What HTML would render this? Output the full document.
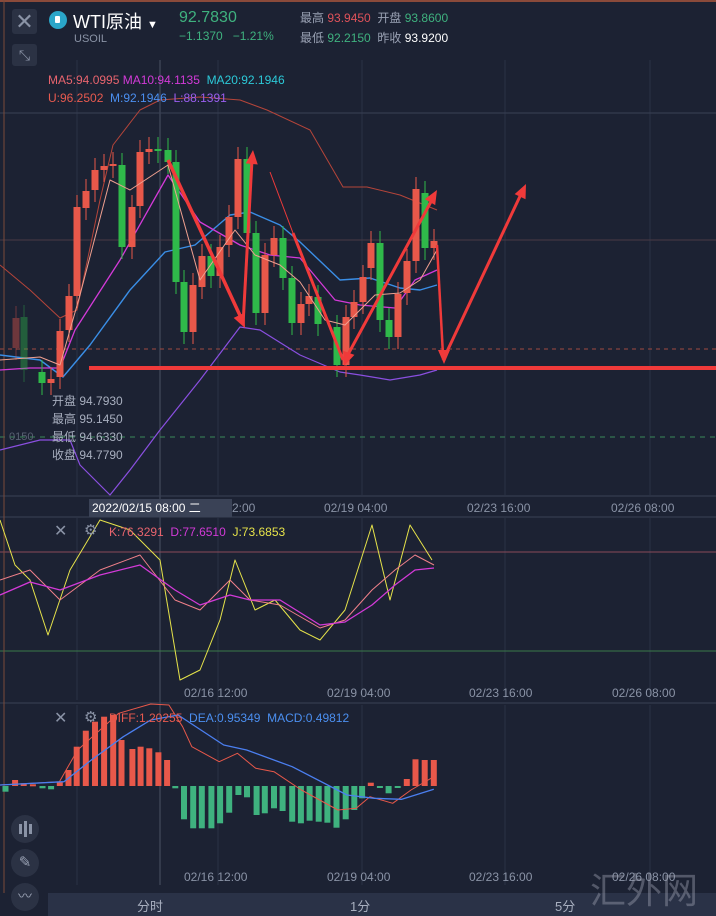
<!DOCTYPE html><html><head><meta charset="utf-8"><style>
body{margin:0;width:716px;height:916px;background:#1c2233;overflow:hidden;font-family:"Liberation Sans","Noto Sans CJK SC",sans-serif;position:relative}
.t{position:absolute;white-space:nowrap}
</style></head><body>
<svg id="s" width="716" height="916" style="position:absolute;left:0;top:0" xmlns="http://www.w3.org/2000/svg"></svg>
<div class="t" style="left:12px;top:9px;width:25px;height:25px;background:#2b3244;border-radius:3px;color:#8a93a6;font-size:22px;line-height:25px;text-align:center">✕</div>
<div class="t" style="left:12px;top:44px;width:25px;height:22px;background:#2b3244;border-radius:3px;color:#8a93a6;font-size:14px;line-height:22px;text-align:center">⤡</div>
<div class="t" style="left:49px;top:11px;width:18px;height:18px;border-radius:50%;background:#2aa6c9"><div style="position:absolute;left:6px;top:5px;width:5px;height:7px;background:#fff;border-radius:1px"></div></div>
<div class="t" style="left:73px;top:8px;color:#fff;font-size:18px">WTI原油 <span style="font-size:11px">▼</span></div>
<div class="t" style="left:74px;top:33px;color:#8a93a6;font-size:11px">USOIL</div>
<div class="t" style="left:179px;top:9px;color:#3fb27f;font-size:16px">92.7830</div>
<div class="t" style="left:179px;top:29px;color:#3fb27f;font-size:12px">−1.1370 &nbsp; −1.21%</div>
<div class="t" style="left:300px;top:9px;font-size:12px;color:#9aa2b4">最高 <span style="color:#e0525a">93.9450</span> &nbsp;开盘 <span style="color:#3fb27f">93.8600</span></div>
<div class="t" style="left:300px;top:29px;font-size:12px;color:#9aa2b4">最低 <span style="color:#3fb27f">92.2150</span> &nbsp;昨收 <span style="color:#fff">93.9200</span></div>
<div class="t" style="left:48px;top:73px;font-size:12px;color:#e8646e">MA5:94.0995 <span style="color:#d33ad8">MA10:94.1135</span> &nbsp;<span style="color:#2cc9d8">MA20:92.1946</span></div>
<div class="t" style="left:48px;top:91px;font-size:12px;color:#e85a4f">U:96.2502 &nbsp;<span style="color:#4b8ff0">M:92.1946</span> &nbsp;<span style="color:#9a5ef0">L:88.1391</span></div>
<div class="t" style="left:52px;top:392px;font-size:12px;color:#a8afbf;line-height:18px">开盘 94.7930<br>最高 95.1450<br>最低 94.6330<br>收盘 94.7790</div>
<div class="t" style="left:9px;top:431px;font-size:11px;color:#5a6274">0150</div>
<div class="t" style="left:89px;top:499px;width:140px;height:18px;background:#3a4256;color:#fff;font-size:12px;line-height:18px;padding-left:3px">2022/02/15 08:00 二</div>
<div class="t" style="left:232px;top:501px;font-size:12px;color:#8a93a6">2:00</div>
<div class="t" style="left:324px;top:501px;font-size:12px;color:#8a93a6">02/19 04:00</div>
<div class="t" style="left:467px;top:501px;font-size:12px;color:#8a93a6">02/23 16:00</div>
<div class="t" style="left:611px;top:501px;font-size:12px;color:#8a93a6">02/26 08:00</div>
<div class="t" style="left:54px;top:521px;font-size:16px;color:#8a93a6">✕</div>
<div class="t" style="left:84px;top:521px;font-size:15px;color:#8a93a6">⚙</div>
<div class="t" style="left:109px;top:525px;font-size:12px;color:#e8646e">K:76.3291 &nbsp;<span style="color:#d33ad8">D:77.6510</span> &nbsp;<span style="color:#e6e34a">J:73.6853</span></div>
<div class="t" style="left:54px;top:708px;font-size:16px;color:#8a93a6">✕</div>
<div class="t" style="left:84px;top:708px;font-size:15px;color:#8a93a6">⚙</div>
<div class="t" style="left:109px;top:711px;font-size:12px;color:#e85a4f">DIFF:1.20255 &nbsp;<span style="color:#4b8ff0">DEA:0.95349 &nbsp;MACD:0.49812</span></div>
<div class="t" style="left:184px;top:686px;font-size:12px;color:#8a93a6">02/16 12:00</div>
<div class="t" style="left:327px;top:686px;font-size:12px;color:#8a93a6">02/19 04:00</div>
<div class="t" style="left:469px;top:686px;font-size:12px;color:#8a93a6">02/23 16:00</div>
<div class="t" style="left:612px;top:686px;font-size:12px;color:#8a93a6">02/26 08:00</div>
<div class="t" style="left:184px;top:870px;font-size:12px;color:#8a93a6">02/16 12:00</div>
<div class="t" style="left:327px;top:870px;font-size:12px;color:#8a93a6">02/19 04:00</div>
<div class="t" style="left:469px;top:870px;font-size:12px;color:#8a93a6">02/23 16:00</div>
<div class="t" style="left:612px;top:870px;font-size:12px;color:#8a93a6">02/26 08:00</div>
<div class="t" style="left:48px;top:893px;width:668px;height:23px;background:#2a3247"></div>
<div class="t" style="left:137px;top:896px;font-size:13px;color:#a8afbf">分时</div>
<div class="t" style="left:350px;top:896px;font-size:13px;color:#a8afbf">1分</div>
<div class="t" style="left:555px;top:896px;font-size:13px;color:#a8afbf">5分</div>
<div class="t" style="left:590px;top:862px;font-size:36px;color:rgba(150,155,170,0.45)">汇外网</div>
<div class="t" style="left:11px;top:815px;width:28px;height:28px;border-radius:50%;background:#2b3244"><div style="position:absolute;left:8px;top:9px;width:3px;height:10px;background:#8a93a6"></div><div style="position:absolute;left:13px;top:6px;width:3px;height:16px;background:#8a93a6"></div><div style="position:absolute;left:18px;top:9px;width:3px;height:10px;background:#8a93a6"></div></div>
<div class="t" style="left:11px;top:849px;width:28px;height:28px;border-radius:50%;background:#2b3244;color:#9aa2b4;font-size:15px;text-align:center;line-height:28px">✎</div>
<div class="t" style="left:11px;top:883px;width:28px;height:28px;border-radius:50%;background:#2b3244;color:#9aa2b4;font-size:14px;text-align:center;line-height:26px">〰</div>
<script>
const s=document.getElementById('s');let h='';
const L=(x1,y1,x2,y2,c,w,d)=>h+=`<line x1="${x1}" y1="${y1}" x2="${x2}" y2="${y2}" stroke="${c}" stroke-width="${w}" ${d?'stroke-dasharray="'+d+'"':''}/>`;
const P=(pts,c,w)=>h+=`<polyline points="${pts.map(p=>p.join(',')).join(' ')}" fill="none" stroke="${c}" stroke-width="${w}" stroke-linejoin="round"/>`;
h+='<rect x="0" y="0" width="716" height="2" fill="#8a4a3a"/>';
[77,218,362,505,650].forEach(x=>{L(x,60,x,495,'#2a3144',1);L(x,518,x,700,'#2a3144',1);L(x,705,x,885,'#2a3144',1)});
L(160,60,160,885,'#4a5163',1);
L(0,113,716,113,'#3a4154',1);L(0,240,716,240,'#4a3a44',1);
L(0,349,716,349,'#a04a40',1,'4,4');L(0,437,716,437,'#3a8a5a',1,'5,5');
L(0,496,716,496,'#3a4154',1);L(0,517,716,517,'#3a4154',1);L(0,703,716,703,'#3a4154',1);
L(0,552,716,552,'#8a4a5a',1);L(0,651,716,651,'#3a7a4a',1);
L(4,0,4,893,'#7a4a3a',1);
P([[0,265],[30,290],[60,318],[77,310],[100,200],[113,145],[140,110],[160,100],[200,97],[240,100],[267,110],[310,130],[343,187],[367,187],[400,195],[437,210]],'#b5453a',1);
P([[0,450],[40,440],[70,440],[80,465],[110,495],[130,470],[160,430],[200,380],[240,327],[260,330],[300,355],[340,372],[360,375],[390,380],[420,375],[437,370]],'#8a4fe0',1.2);
P([[0,355],[40,360],[63,377],[90,345],[130,290],[165,252],[195,245],[230,215],[250,212],[280,225],[300,242],[340,280],[370,278],[400,288],[420,290],[437,285]],'#3a8ee6',1.4);
P([[0,370],[30,368],[60,368],[75,330],[120,260],[168,175],[200,222],[240,245],[270,255],[300,258],[335,300],[360,305],[395,308],[415,280],[437,270]],'#d33ad8',1.3);
const C=[[16,318,348,0,.4],[24,317,370,1,.4],[42,372,383,1],[51,379,383,0],[60,331,377,0],[69,296,330,0],[77,207,296,0],[86,191,208,0],[95,170,190,0],[104,166,170,0],[113,164,166,0],[122,165,247,1],[132,207,247,0],[140,152,206,0],[149,149,152,0],[158,149,151,1],[168,150,162,1],[176,162,282,1],[184,282,332,1],[193,285,332,0],[202,256,287,0],[211,256,276,1],[220,247,276,0],[229,217,245,0],[238,159,217,0],[247,159,233,1],[256,233,313,1],[265,255,313,0],[274,238,255,0],[283,238,278,1],[292,278,323,1],[301,304,323,0],[309,296,304,0],[318,297,324,1],[337,327,365,1],[346,317,365,0],[354,302,317,0],[363,277,302,0],[371,243,268,0],[380,243,320,1],[389,320,337,1],[398,294,337,0],[407,261,293,0],[416,189,261,0],[425,193,248,1],[434,241,248,0]];
C.forEach(c=>{const col=c[3]?'#2fb94a':'#e8584a';const o=c[4]||1;h+=`<g opacity="${o}"><line x1="${c[0]}" y1="${c[1]-12}" x2="${c[0]}" y2="${c[2]+12}" stroke="${col}"/><rect x="${c[0]-3.5}" y="${c[1]}" width="7" height="${Math.max(2,c[2]-c[1])}" fill="${col}"/></g>`});
P([[0,360],[40,357],[60,365],[80,295],[110,180],[130,190],[168,165],[200,280],[235,230],[255,255],[280,265],[300,282],[325,320],[345,325],[375,295],[400,293],[420,280],[437,250]],'#f0a090',1);
const R='#f03a3a';
L(89,368,716,368,R,4);
L(168,160,243,322,R,3.5);L(243,325,252,160,R,3);L(270,172,293,233,R,1);L(293,233,343,360,R,3);L(345,360,433,198,R,3);L(437,245,443,355,R,2.5);L(443,360,522,192,R,3);
const A=(x,y,a)=>{h+=`<polygon points="0,0 -6,14 6,14" fill="${R}" transform="translate(${x},${y}) rotate(${a})"/>`};
A(253,150,5);A(245,328,155);A(344,366,200);A(437,190,30);A(444,364,180);A(526,184,25);
// KDJ
P([[0,520],[15,565],[30,580],[48,635],[70,570],[100,520],[130,530],[160,560],[180,680],[200,670],[220,620],[235,560],[255,610],[275,600],[300,630],[320,640],[345,610],[372,525],[390,600],[410,525],[432,560]],'#e6e34a',1);
P([[0,580],[30,570],[60,600],[100,570],[140,555],[175,600],[200,610],[230,580],[250,600],[280,605],[320,628],[345,620],[372,590],[395,570],[415,555],[434,565]],'#f0808a',1);
P([[0,595],[30,582],[60,590],[100,575],[140,565],[175,590],[200,605],[230,595],[250,600],[280,600],[320,625],[345,622],[372,605],[395,585],[415,570],[434,568]],'#d33ad8',1.3);
// MACD
const z=786, sx=x=>+(x/2.19).toFixed(1), sy=y=>+(700+y/3).toFixed(1);
const bar=(zx,zy,col)=>{const x=sx(zx),y=sy(zy);h+=`<rect x="${x-3}" y="${Math.min(y,z)}" width="6" height="${Math.max(2,Math.abs(y-z))}" fill="${col}"/>`};
const G='#3fb27f',RD='#e8584a';
bar(12,275,G);bar(33,240,RD);bar(52,250,RD);bar(72,253,RD);bar(93,265,G);bar(112,268,G);bar(131,245,RD);
[[150,210],[168,140],[188,92],[208,65],[228,50],[248,45],[266,120],[290,147],[308,140],[327,145],[347,157],[366,180]].forEach(b=>bar(b[0],b[1],RD));
[[384,265],[403,358],[423,385],[442,385],[463,385],[482,370],[502,338],[522,285],[541,292],[562,345],[580,340],[600,325],[619,333],[640,365],[659,370],[678,362],[698,365],[717,368],[737,383],[757,358],[776,330],[793,295]].forEach(b=>bar(b[0],b[1],G));
bar(812,248,RD);bar(832,262,G);bar(851,280,G);bar(871,262,G);bar(891,237,RD);bar(910,178,RD);bar(930,180,RD);bar(950,180,RD);
const cv=a=>a.map(p=>[sx(p[0]),sy(p[1])]);
P(cv([[0,255],[130,245],[170,150],[260,40],[330,12],[370,15],[400,80],[420,140],[480,185],[520,160],[560,205],[600,215],[660,270],[740,330],[780,325],[810,290],[860,310],[900,270],[950,230]]),'#e8584a',1);
P(cv([[0,255],[140,245],[200,180],[270,110],[330,60],[390,45],[490,135],[540,150],[640,200],[760,285],[820,295],[880,298],[950,268]]),'#4b7ff0',1.3);
s.innerHTML=h;
</script>
</body></html>
